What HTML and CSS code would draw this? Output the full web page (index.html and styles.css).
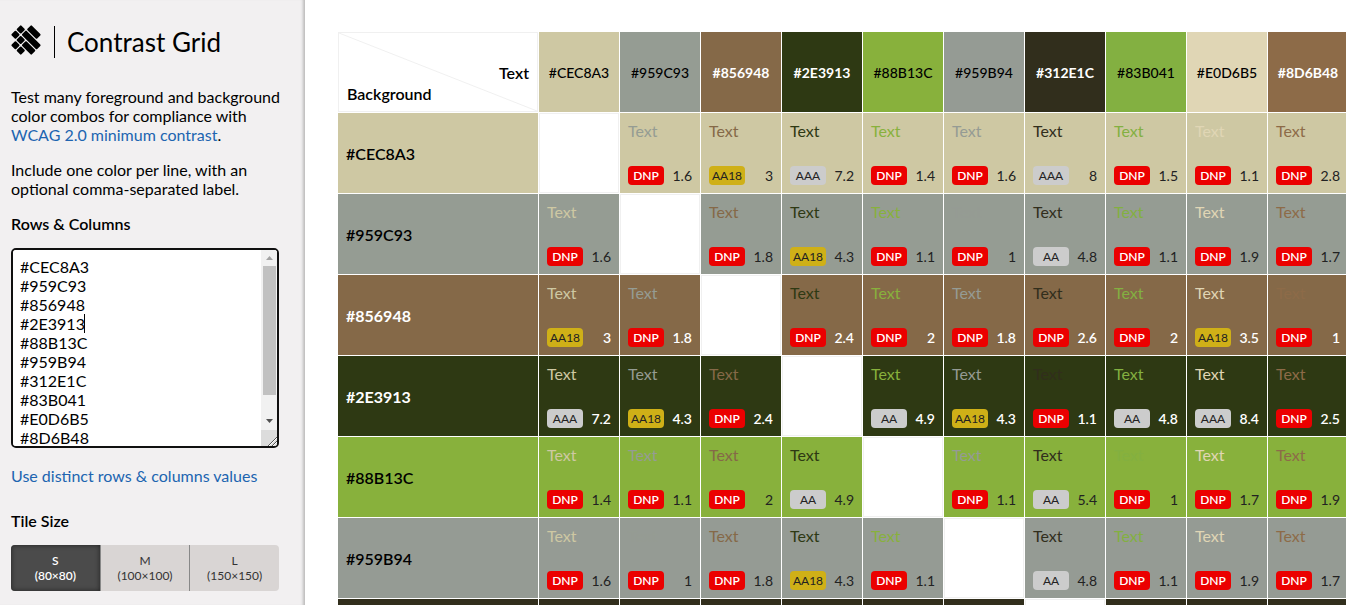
FILE: index.html
```html
<!DOCTYPE html>
<html lang="en">
<head>
<meta charset="utf-8">
<title>Contrast Grid</title>
<link rel="stylesheet" href="styles.css">
</head>
<body>
<div class="app">
  <aside class="sidebar">
    <header class="brand">
      <svg class="logo" viewBox="-15 -15 30 30" aria-hidden="true">
        <g transform="rotate(45)">
          <rect x="-14.3" y="-6.9" width="6.3" height="6.3" rx="1"/>
          <rect x="-14.3" y="0.6" width="6.3" height="6.3" rx="1"/>
          <rect x="-6.9" y="0.6" width="6.3" height="6.3" rx="1"/>
          <rect x="-6.9" y="8" width="6.3" height="6.3" rx="1"/>
          <rect x="0.6" y="8" width="6.3" height="6.3" rx="1"/>
          <rect x="-6.9" y="-14.3" width="13.8" height="6.3" rx="1"/>
          <rect x="-6.9" y="-6.9" width="21.2" height="6.3" rx="1"/>
          <rect x="0.6" y="0.6" width="13.7" height="6.3" rx="1"/>
        </g>
      </svg>
      <h1 class="title">Contrast Grid</h1>
    </header>
    <p class="copy">Test many foreground and background color combos for compliance with <a href="#wcag">WCAG 2.0 minimum contrast</a>.</p>
    <p class="copy">Include one color per line, with an optional comma-separated label.</p>
    <label class="field-label" for="colors">Rows &amp; Columns</label>
    <div class="editor">
      <textarea id="colors" class="colors" spellcheck="false">#CEC8A3
#959C93
#856948
#2E3913
#88B13C
#959B94
#312E1C
#83B041
#E0D6B5
#8D6B48
</textarea>
      <span class="caret" aria-hidden="true"></span>
      <svg class="scrollbar" viewBox="0 0 16 196" aria-hidden="true">
        <path fill="#f1f1f1" d="M0 0h16v180H0z"/>
        <path fill="#c1c1c1" d="M2 16h13v129H2z"/>
        <path fill="#a3a3a3" d="M5 10h7l-3.500-4z"/>
        <path fill="#505050" d="M5 169h7l-3.500 4z"/>
        <path fill="#dcdcdc" d="M0 180h16v16H0z"/>
        <path fill="none" stroke="#fff" d="M8 196l8-8M12 196l4-4"/>
        <path fill="none" stroke="#555" d="M7 196l9-9M11 196l5-5"/>
      </svg>
    </div>
    <a class="toggle" href="#distinct">Use distinct rows &amp; columns values</a>
    <fieldset class="sizes">
      <legend class="field-label">Tile Size</legend>
      <div class="segments">
        <label class="segment"><input type="radio" name="size" checked><span>S<br>(80×80)</span></label>
        <label class="segment"><input type="radio" name="size"><span>M<br>(100×100)</span></label>
        <label class="segment"><input type="radio" name="size"><span>L<br>(150×150)</span></label>
      </div>
    </fieldset>
  </aside>
  <main class="main">
    <table class="grid">
      <thead>
        <tr id="head">
          <th class="corner">
            <svg class="corner-line" viewBox="0 0 200 80" preserveAspectRatio="none" aria-hidden="true"><path d="M0 0L200 80" fill="none" stroke="#f0f0f0"/></svg>
            <div class="corner-text">Text</div>
            <div class="corner-background">Background</div>
          </th>
        </tr>
      </thead>
      <tbody id="body"></tbody>
    </table>
  </main>
</div>
<script src="grid.js"></script>
</body>
</html>
```
FILE: styles.css
```css
* { box-sizing: border-box; }
body { margin: 0; font: 16px/19px Lato, "Liberation Sans", sans-serif; color: #000; background: #fff; }
a { color: #2064b0; text-decoration: none; }
.app { display: flex; height: 100vh; overflow: hidden; }
.sidebar { flex: none; width: 305px; padding: 25px 26px 14px 11px; overflow: hidden; background: #f2f0f1; box-shadow: inset -4px 0 3px -2px #bbb; }
.brand { display: flex; align-items: center; height: 34px; margin-bottom: 28px; }
.logo { align-self: flex-start; width: 30px; height: 30px; }
.title { margin: 0 0 0 13px; padding-left: 12px; border-left: 1px solid #000; font-size: 26px; line-height: 32px; font-weight: 400; }
.copy { margin: 0 -12px 16px 0; }
.field-label { display: block; padding: 0; font-weight: 600; }
.editor { position: relative; margin: 15px 0 18px; }
.colors { display: block; width: 100%; height: 200px; padding: 7px; border: 2px solid #101010; border-radius: 5px; outline: 0; background: #fff; color: #000; font: inherit; overflow-y: scroll; resize: vertical; }
.caret { position: absolute; left: 73px; top: 66px; width: 1px; height: 19px; background: #000; }
.scrollbar { position: absolute; top: 2px; right: 2px; width: 16px; height: 196px; border-radius: 0 3px 3px 0; pointer-events: none; }
.toggle { display: block; margin-bottom: 26px; }
.sizes { margin: 0; padding: 0; border: 0; }
.segments { display: flex; margin-top: 15px; border-radius: 4px; overflow: hidden; background: #d9d5d4; }
.segment { position: relative; flex: 1; padding: 8px 0; text-align: center; font-size: 12px; line-height: 15px; color: #333; }
.segment + .segment { border-left: 1px solid #888; }
.segment input { position: absolute; inset: 0; width: 100%; height: 100%; margin: 0; opacity: 0; }
.segment:has(input:checked) { background: #4b4b4b; color: #fff; font-weight: 600; box-shadow: inset 0 0 5px #222; }
.main { flex: 1; min-width: 0; overflow: hidden; padding: 31px 0 0 32px; }
.grid { width: 1012px; border-collapse: separate; border-spacing: 1px; table-layout: fixed; }
.grid th, .grid td { height: 80px; padding: 0; }
.grid .corner { position: relative; width: 200px; padding: 21px 8px 0; border: 1px solid #f0f0f0; font-weight: 600; text-align: left; }
.corner-line { position: absolute; inset: 0; width: 100%; height: 100%; }
.corner-text { text-align: right; line-height: 21px; }
.corner-background { line-height: 21px; }
.col-head { width: 80px; font-size: 14px; font-weight: 500; text-align: center; }
.grid .row-head { padding-left: 8px; font-weight: 600; text-align: left; }
.grid .col-head.light, .grid .row-head.light { color: #fff; font-weight: 700; }
.same { border: 1px solid #f0f0f0; }
.tile { display: flex; flex-direction: column; justify-content: space-between; height: 80px; padding: 8px; }
.score { display: flex; justify-content: space-between; align-items: center; font-size: 14px; }
.badge { width: 36px; border-radius: 4px; font-size: 12px; line-height: 19px; text-align: center; }
.dark .ratio { color: #222; }
.light .ratio { color: #fff; font-weight: 600; }
.dnp { background: #eb0000; color: #fff; font-weight: 600; }
.aa18 { background: #cfb017; color: #222; }
.aa, .aaa { background: #ccc; color: #222; }
```
FILE: grid.js
```js
const colors = document.getElementById("colors").value.trim().split("\n");
const luminance = (hex) => {
  const [r, g, b] = [1, 3, 5].map((i) => {
    const c = parseInt(hex.slice(i, i + 2), 16) / 255;
    return c <= 0.03928 ? c / 12.92 : ((c + 0.055) / 1.055) ** 2.4;
  });
  return 0.2126 * r + 0.7152 * g + 0.0722 * b;
};
const contrast = (a, b) => {
  const [hi, lo] = [luminance(a), luminance(b)].sort((x, y) => y - x);
  const hundredths = Math.round(((hi + 0.05) / (lo + 0.05)) * 100);
  return Math.floor(hundredths / 10) / 10;
};
const grade = (n) => (n >= 7 ? "AAA" : n >= 4.5 ? "AA" : n >= 3 ? "AA18" : "DNP");
const tone = (c) => (luminance(c) < 0.18 ? "light" : "dark");

document.getElementById("head").insertAdjacentHTML("beforeend", colors.map((c) =>
  `<th scope="col" class="col-head ${tone(c)}" style="background:${c}">${c}</th>`).join(""));

document.getElementById("body").innerHTML = colors.map((bg) =>
  `<tr><th scope="row" class="row-head ${tone(bg)}" style="background:${bg}">${bg}</th>` +
  colors.map((fg) => {
    if (fg === bg) return `<td class="same"></td>`;
    const n = contrast(bg, fg);
    const g = grade(n);
    return `<td class="${tone(bg)}" style="background:${bg}"><div class="tile"><span style="color:${fg}">Text</span>` +
      `<div class="score"><span class="badge ${g.toLowerCase()}">${g}</span><span class="ratio">${n}</span></div></div></td>`;
  }).join("") + `</tr>`).join("");
```
